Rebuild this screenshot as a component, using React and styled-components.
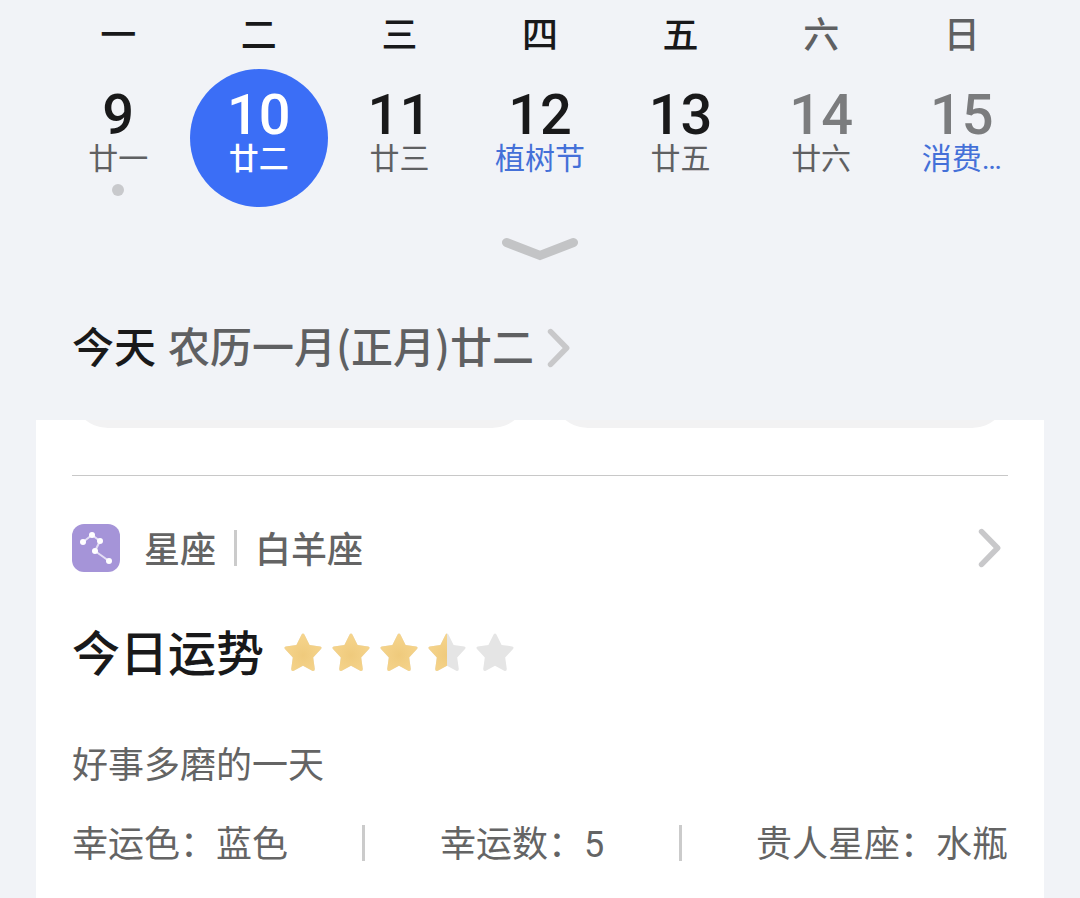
import React from 'react';
import styled, { createGlobalStyle } from 'styled-components';

const GlobalStyle = createGlobalStyle`
  * { box-sizing: border-box; }
  body {
    margin: 0;
    background: #f1f3f7;
    color: #19191a;
    font-family: "Noto Sans CJK SC", sans-serif;
  }
  button {
    border: 0;
    padding: 0;
    background: none;
    color: inherit;
    font: inherit;
    cursor: pointer;
  }
  h1, h2, p, dl, dd, dt { margin: 0; font-weight: 400; }
`;

const Page = styled.div`
  min-height: 100vh;
  display: flex;
  flex-direction: column;
`;

const Week = styled.section`
  display: grid;
  grid-template-columns: repeat(7, minmax(0, 1fr));
  justify-items: center;
  padding: 6px 48px 0;
`;

const Weekday = styled.span`
  font-size: 36px;
  line-height: 52px;
  height: 63px;
  font-weight: 500;
  color: ${(p) => (p.$weekend ? '#5f6062' : '#19191a')};
`;

const Day = styled.button`
  width: 138px;
  height: 138px;
  border-radius: 50%;
  display: flex;
  flex-direction: column;
  align-items: center;
  padding-top: 19px;
  background: ${(p) => (p.$selected ? '#3b6ef6' : 'transparent')};
`;

const DayNumber = styled.span`
  font-family: Roboto, sans-serif;
  font-size: 56px;
  line-height: 54px;
  font-weight: 500;
  color: ${(p) => (p.$selected ? '#fff' : p.$weekend ? '#7b7c7e' : '#19191a')};
`;

const DayLabel = styled.span`
  font-family: Roboto, "Noto Sans CJK SC", sans-serif;
  font-size: 30px;
  line-height: 34px;
  white-space: nowrap;
  font-weight: ${(p) => (p.$selected ? 500 : 400)};
  color: ${(p) => (p.$selected ? '#fff' : p.$festival ? '#4470d8' : '#5f6062')};
`;

const Dot = styled.span`
  width: 12px;
  height: 12px;
  margin-top: 8px;
  border-radius: 50%;
  background: #c8c9cc;
`;

const Expand = styled.button`
  align-self: center;
  margin-top: 28px;
  height: 28px;
  svg { display: block; }
`;

const Today = styled.button`
  align-self: flex-start;
  display: flex;
  align-items: center;
  gap: 12px;
  margin: 52px 72px 39px;
  font-size: 42px;
  line-height: 60px;
  font-weight: 500;
  span { padding-bottom: 6px; }
`;

const TodayTitle = styled.span`
  color: #19191a;
`;

const TodayLunar = styled.span`
  color: #5f6062;
  margin-right: 1px;
`;

const Card = styled.main`
  flex: 1;
  margin: 0 36px;
  padding: 0 36px 32px;
  background: #fff;
`;

const TileRow = styled.div`
  height: 8px;
  display: flex;
  align-items: flex-end;
  gap: 24px;
  overflow: hidden;
`;

const Tile = styled.div`
  flex: 1;
  height: 96px;
  border-radius: 36px;
  background: #f2f2f3;
`;

const SignLink = styled.button`
  width: 100%;
  margin-top: 47px;
  padding: 48px 6px 0 0;
  border-top: 1px solid #c8c8c8;
  display: flex;
  align-items: center;
  font-size: 36px;
  line-height: 42px;
  font-weight: 500;
  color: #646464;
  svg { display: block; }
`;

const SignName = styled.span`
  margin-left: 24px;
  padding-bottom: 2px;
`;

const Divider = styled.span`
  width: 3px;
  height: 36px;
  background: #cbcbcb;
`;

const SignDivider = styled(Divider)`
  margin: 0 -6px 0 18px;
`;

const Push = styled.span`
  margin-left: auto;
`;

const Fortune = styled.div`
  display: flex;
  align-items: center;
  gap: 20px;
  margin-top: 42px;
`;

const FortuneTitle = styled.h2`
  font-size: 48px;
  line-height: 72px;
  padding-bottom: 6px;
  font-weight: 500;
`;

const Stars = styled.div`
  display: flex;
  gap: 10px;
`;

const Summary = styled.p`
  margin-top: 44px;
  font-size: 36px;
  line-height: 52px;
  color: #646464;
`;

const Facts = styled.dl`
  display: flex;
  align-items: center;
  justify-content: space-between;
  margin-top: 27px;
  font-size: 36px;
  line-height: 52px;
  color: #646464;
`;

const Fact = styled.div`
  display: flex;
  padding-top: 4px;
  font-family: Roboto, "Noto Sans CJK SC", sans-serif;
`;

const days = [
  { weekday: '一', number: 9, label: '廿一', dot: true },
  { weekday: '二', number: 10, label: '廿二', selected: true },
  { weekday: '三', number: 11, label: '廿三' },
  { weekday: '四', number: 12, label: '植树节', festival: true },
  { weekday: '五', number: 13, label: '廿五' },
  { weekday: '六', number: 14, label: '廿六', weekend: true },
  { weekday: '日', number: 15, label: '消费…', weekend: true, festival: true },
];

const facts = [
  ['幸运色：', '蓝色'],
  ['幸运数：', '5'],
  ['贵人星座：', '水瓶'],
];

function ChevronRight() {
  return (
    <svg width="24" height="40" viewBox="0 0 24 40" fill="none" aria-hidden="true">
      <path d="M3.6 3.6 L19.6 20 L3.6 36.4" stroke="#c8c8ca" strokeWidth="5.6" strokeLinecap="round" strokeLinejoin="round" />
    </svg>
  );
}

const starPath =
  'M17.6 1.5 Q19 -0.6 20.4 1.5 L25.6 12 L36.2 13.4 Q38.6 14.2 36.8 16.2 L29.2 24.4 L30.8 36 Q30.8 38.6 28.2 37.8 L19 32.8 L9.8 37.8 Q7.2 38.6 7.2 36 L8.8 24.4 L1.2 16.2 Q-0.6 14.2 1.8 13.4 L12.4 12 Z';

function Star({ id, fill }) {
  return (
    <svg width="38" height="40" viewBox="0 0 38 40" aria-hidden="true">
      <defs>
        <radialGradient id={`gold-${id}`} cx="50%" cy="58%" r="60%">
          <stop offset="0" stopColor="#efca7c" />
          <stop offset="1" stopColor="#f6d58e" />
        </radialGradient>
        <clipPath id={`part-${id}`}>
          <rect width={38 * fill} height="40" />
        </clipPath>
      </defs>
      <path d={starPath} fill="#e5e5e5" />
      <path d={starPath} fill={`url(#gold-${id})`} clipPath={`url(#part-${id})`} />
    </svg>
  );
}

function ConstellationIcon() {
  return (
    <svg width="48" height="48" viewBox="0 0 48 48" aria-hidden="true">
      <rect width="48" height="48" rx="12" fill="#a594d8" />
      <path d="M11 18 L20 11 L28 17 L23 27 L37 37" fill="none" stroke="#e4def5" strokeWidth="2" />
      <g fill="#fff">
        <circle cx="11" cy="18" r="3" />
        <circle cx="20" cy="11" r="3" />
        <circle cx="28" cy="17" r="3" />
        <circle cx="23" cy="27" r="3" />
        <circle cx="37" cy="37" r="3" />
      </g>
    </svg>
  );
}

export default function App() {
  return (
    <Page>
      <GlobalStyle />
      <Week>
        {days.map((d) => (
          <Weekday key={d.weekday} $weekend={d.weekend}>{d.weekday}</Weekday>
        ))}
        {days.map((d) => (
          <Day key={d.number} type="button" $selected={d.selected} aria-pressed={!!d.selected}>
            <DayNumber $selected={d.selected} $weekend={d.weekend}>{d.number}</DayNumber>
            <DayLabel $selected={d.selected} $festival={d.festival}>{d.label}</DayLabel>
            {d.dot && <Dot />}
          </Day>
        ))}
      </Week>
      <Expand type="button" aria-label="展开">
        <svg width="78" height="28" viewBox="0 0 78 28" fill="none">
          <path d="M5.5 7.5 L39 20.5 L72.5 7.5" stroke="#c3c4c6" strokeWidth="9" strokeLinecap="round" />
        </svg>
      </Expand>
      <Today type="button">
        <TodayTitle>今天</TodayTitle>
        <TodayLunar>农历一月(正月)廿二</TodayLunar>
        <ChevronRight />
      </Today>
      <Card>
        <TileRow>
          <Tile />
          <Tile />
        </TileRow>
        <SignLink type="button">
          <ConstellationIcon />
          <SignName>星座</SignName>
          <SignDivider />
          <SignName>白羊座</SignName>
          <Push><ChevronRight /></Push>
        </SignLink>
        <Fortune>
          <FortuneTitle>今日运势</FortuneTitle>
          <Stars role="img" aria-label="3.5 / 5">
            {[1, 1, 1, 0.5, 0].map((fill, i) => (
              <Star key={i} id={i} fill={fill} />
            ))}
          </Stars>
        </Fortune>
        <Summary>好事多磨的一天</Summary>
        <Facts>
          {facts.map(([name, value], i) => (
            <React.Fragment key={name}>
              {i > 0 && <Divider />}
              <Fact>
                <dt>{name}</dt>
                <dd>{value}</dd>
              </Fact>
            </React.Fragment>
          ))}
        </Facts>
      </Card>
    </Page>
  );
}
